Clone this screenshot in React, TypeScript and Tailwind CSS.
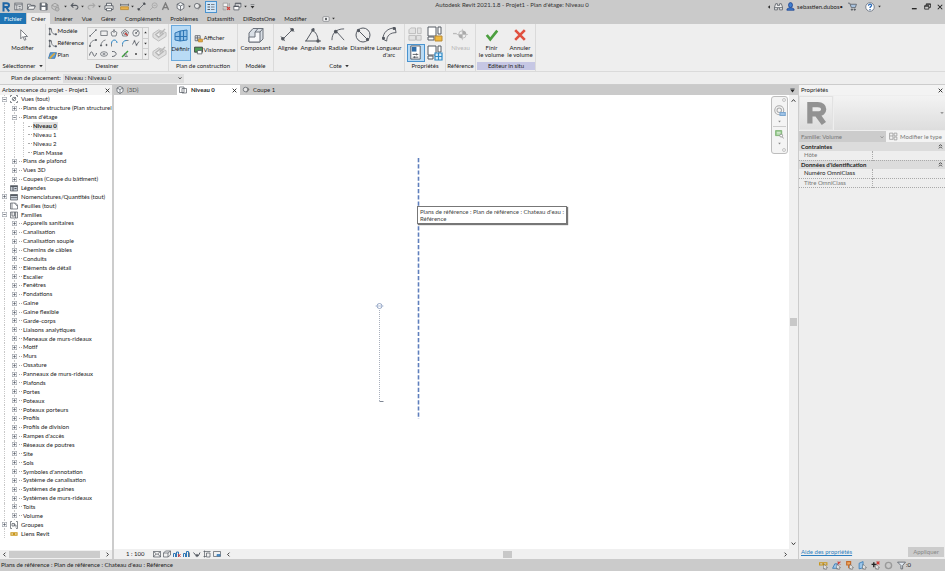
import { useState } from 'react'
import type { ReactNode } from 'react'

function Svg({ className = 'size-[10px]', children }: { className?: string; children: ReactNode }) {
  return (
    <svg viewBox="0 0 16 16" className={`shrink-0 ${className}`} fill="none" stroke="#555a62" strokeWidth="1.4" aria-hidden="true">
      {children}
    </svg>
  )
}

function Caret({ className = 'size-[4px]' }: { className?: string }) {
  return <Svg className={className}><path d="M1 4h14l-7 9z" fill="#333" stroke="none" /></Svg>
}

function Cross({ className = 'size-[6px]' }: { className?: string }) {
  return <Svg className={className}><path d="M2 2l12 12M14 2L2 14" stroke="#222" strokeWidth="2.8" /></Svg>
}

function Chevron({ dir, className = 'size-[5px]' }: { dir: 'up' | 'down' | 'left' | 'right'; className?: string }) {
  const d = {
    up: 'M2 12l6-7 6 7',
    down: 'M2 5l6 7 6-7',
    left: 'M11 2L5 8l6 6',
    right: 'M5 2l6 6-6 6',
  }[dir]
  return <Svg className={className}><path d={d} stroke="#333" strokeWidth="3" /></Svg>
}

const cube = (
  <>
    <path d="M8 1l6 3v7l-6 4-6-4V4z" fill="#f4f6f8" />
    <path d="M2 4l6 3 6-3M8 7v8" />
  </>
)

const sectionMark = (
  <>
    <circle cx="7" cy="7" r="4.5" fill="#e8e8e8" />
    <path d="M11 2l4 5-7 8 3-6z" fill="#777" stroke="none" />
  </>
)

type Tool = { label: string; cell: string; icon: ReactNode }

const quickTools: Tool[] = [
  { label: 'Accueil', cell: 'w-[13px]', icon: <Svg className="size-[9px]"><rect x="1.5" y="2" width="13" height="12" fill="#f3f3f3" /><path d="M1.5 5h13M5 5v9M8 8h4M8 11h4" /></Svg> },
  { label: 'Ouvrir', cell: 'w-[13px]', icon: <Svg className="size-[9px]"><path d="M1 13V4h5l1 2h6v2M1 13l3-6h11l-3 6z" fill="#f3f3f3" /></Svg> },
  { label: 'Enregistrer', cell: 'w-[11px]', icon: <Svg className="size-[9px]"><path d="M2 2h11l1.500 2v10H2z" fill="#6a7078" /><path d="M5 2h6v4H5zM4.500 9h7v5h-7z" fill="#fff" stroke="none" /></Svg> },
  { label: 'Synchroniser', cell: 'w-[12px]', icon: <Svg><path d="M8 2l5 3v5l-5 3-5-3V5zM3 5l5 3 5-3" stroke="#999" /><circle cx="11.500" cy="11.500" r="3" fill="#bbb" stroke="#999" /></Svg> },
  { label: 'Options de synchronisation', cell: 'w-[8px]', icon: <Caret className="size-[3px]" /> },
  { label: 'Annuler', cell: 'w-[10px]', icon: <Svg className="size-[9px]"><path d="M6 2L2 6l4 4M2 6h8c6 0 5 7 0 7" strokeWidth="1.800" /></Svg> },
  { label: 'Historique annuler', cell: 'w-[7px]', icon: <Caret className="size-[3px]" /> },
  { label: 'Rétablir', cell: 'w-[10px]', icon: <Svg className="size-[9px]"><path d="M10 2l4 4-4 4M14 6H6c-6 0-5 7 0 7" stroke="#a8a8a8" strokeWidth="1.800" /></Svg> },
  { label: 'Historique rétablir', cell: 'w-[7px]', icon: <Caret className="size-[3px]" /> },
  { label: 'Imprimer', cell: 'w-[12px]', icon: <Svg><path d="M4 6V2h8v4M4 12H1.500V6h13v6H12" fill="#f3f3f3" /><path d="M4 10h8v4H4z" fill="#fff" /></Svg> },
  { label: 'Mesurer', cell: 'ml-[3px] w-[12px]', icon: <Svg className="size-[9px]"><path d="M1 3v4M15 3v4M1 5h14" /><path d="M1 8.500h14v5H1z" fill="#e8b04a" stroke="#b98a34" /></Svg> },
  { label: 'Options de mesure', cell: 'w-[5px]', icon: <Caret className="size-[3px]" /> },
  { label: 'Cote alignée', cell: 'w-[13px]', icon: <Svg className="size-[9px]"><path d="M3 13L13 3M1 11l4 4M11 1l4 4" /><circle cx="3" cy="13" r="1.500" fill="#444" /><circle cx="13" cy="3" r="1.500" fill="#444" /></Svg> },
  { label: 'Étiquette', cell: 'w-[11px]', icon: <Svg className="size-[9px]"><circle cx="10" cy="6" r="4.500" stroke="#a5a5a5" /><path d="M7 9l-5 5M8 6h4" stroke="#a5a5a5" /></Svg> },
  { label: 'Texte', cell: 'w-[12px]', icon: <Svg className="size-[9px]"><path d="M2.500 14L8 2l5.500 12M5 10h6" stroke="#7c7c7c" strokeWidth="2.400" /></Svg> },
  { label: 'Vue 3D', cell: 'ml-[3px] w-[12px]', icon: <Svg className="size-[9px]">{cube}</Svg> },
  { label: 'Options 3D', cell: 'w-[6px]', icon: <Caret className="size-[3px]" /> },
  { label: 'Coupe', cell: 'w-[11px]', icon: <Svg className="size-[9px]">{sectionMark}</Svg> },
  { label: 'Lignes fines', cell: 'ml-[2px] h-[12px] w-[12px] border border-[#4a93cf] bg-[#cfe5f7]', icon: <Svg className="size-[8px]"><path d="M1 3h5M1 8h5M1 13h5" strokeWidth="2.400" /><path d="M8 3h7M8 8h7M8 13h7" /></Svg> },
  { label: 'Fermer les vues inactives', cell: 'ml-[3px] w-[12px]', icon: <Svg className="size-[9px]"><path d="M2 2h8v6H2z" fill="#f3f3f3" stroke="#999" /><path d="M2 10v4h5M13 2v5" stroke="#999" /><path d="M9 9l5 5M14 9l-5 5" stroke="#d0413a" strokeWidth="2.400" /></Svg> },
  { label: 'Changer de fenêtre', cell: 'w-[11px]', icon: <Svg className="size-[9px]"><path d="M4 2h10v7H4z" fill="#f3f3f3" /><path d="M1.500 7h9v7h-9z" fill="#fff" /><path d="M1.500 8h9M4 3h10" strokeWidth="2" /></Svg> },
  { label: 'Fenêtres', cell: 'w-[5px]', icon: <Caret className="size-[3px]" /> },
  { label: "Personnaliser la barre d'outils", cell: 'w-[9px]', icon: <Svg className="size-[5px]"><path d="M2 2h12" strokeWidth="2" /><path d="M2 6h12l-6 8z" fill="#333" stroke="none" /></Svg> },
]

const ribbonTabs = ['Créer', 'Insérer', 'Vue', 'Gérer', 'Compléments', 'Problèmes', 'Datasmith', 'DiRootsOne', 'Modifier']

function TitleBar() {
  return (
    <div className="flex h-[13px] items-center">
      <div className="flex shrink-0 items-center">
        <div className="flex w-[12px] justify-center">
          <Svg className="size-[10px]"><path d="M4 15V2h5c5 0 5 6 0 6H4M8 8l5 7" stroke="#1d65a6" strokeWidth="3.200" /></Svg>
        </div>
        {quickTools.map(t => (
          <button key={t.label} aria-label={t.label} className={`flex shrink-0 items-center justify-center ${t.cell}`}>{t.icon}</button>
        ))}
      </div>
      <h1 className="flex-1 pb-[3px] text-center text-[#333]">Autodesk Revit 2021.1.8 - Projet1 - Plan d'étage: Niveau 0</h1>
      <div className="flex shrink-0 items-center">
        <button aria-label="Réduire" className="mr-[3px]"><Svg className="size-[4px]"><path d="M12 1v14L3 8z" fill="#333" stroke="none" /></Svg></button>
        <button aria-label="Rechercher" className="mr-[3px]">
          <Svg className="size-[9px]"><path d="M3 3h3v3h4V3h3l2 6v5h-5v-4H6v4H1V9z" fill="#f0f0f0" /><path d="M1 10h5M10 10h5" /></Svg>
        </button>
        <button className="mr-[5px] flex items-center gap-[2px]">
          <Svg className="size-[9px]"><ellipse cx="8" cy="5.500" rx="3.500" ry="4.500" fill="#3f7fd0" stroke="#1b3f8c" /><path d="M1.500 14.500c0-4 4-4 6.500-4s6.500 0 6.500 4z" fill="#3f7fd0" stroke="#1b3f8c" /></Svg>
          sebastien.dubos•
        </button>
        <button aria-label="App Store" className="mr-[8px]">
          <Svg className="size-[9px]"><path d="M0 2h3l3 8h7l2-6H4" fill="#a9c3e0" /><circle cx="7" cy="13.500" r="1.200" fill="#444" /><circle cx="12" cy="13.500" r="1.200" fill="#444" /></Svg>
        </button>
        <button aria-label="Aide" className="mr-[3px]">
          <Svg><circle cx="8" cy="8" r="6.800" fill="#fff" stroke="#6b7480" /><path d="M5.500 6c0-3.500 5-3.500 5-.5C10.500 7.500 8 7 8 9.500M8 11v2" stroke="#2667b5" strokeWidth="2" /></Svg>
        </button>
        <button aria-label="Options d'aide" className="mr-[30px]"><Caret className="size-[3px]" /></button>
        <button aria-label="Réduire la fenêtre" className="mr-[6px]"><Svg className="size-[7px]"><path d="M2 13h11" strokeWidth="3" stroke="#222" /></Svg></button>
        <button aria-label="Niveau inférieur" className="mr-[6px]"><Svg className="size-[7px]"><path d="M5 5V2h10v8h-4M1.500 6h9.500v8H1.500zM1 7.500h10M5 3h10" stroke="#222" strokeWidth="1.800" /></Svg></button>
        <button aria-label="Fermer" className="mr-[2px]"><Cross /></button>
      </div>
    </div>
  )
}

function TabStrip() {
  const [active, setActive] = useState('Créer')
  return (
    <nav className="flex h-[11px] items-stretch">
      <button className="w-[26px] bg-[#1f74b4] text-white">Fichier</button>
      <div className="ml-px flex gap-px">
        {ribbonTabs.map(t => (
          <button key={t} onClick={() => setActive(t)} className={`px-[4px] ${t === active ? 'bg-[#eeeeee]' : ''}`}>{t}</button>
        ))}
      </div>
      <button aria-label="Affichage du ruban" className="ml-[11px] flex items-center gap-[2px]">
        <Svg className="h-[6px] w-[8px]"><rect x="0" y="2" width="16" height="12" rx="2" fill="#fff" /><circle cx="8" cy="8" r="2.500" fill="#333" /></Svg>
        <Caret className="size-[3px]" />
      </button>
    </nav>
  )
}

function Panel({ title, className, caret, highlight, children }: {
  title: string; className: string; caret?: boolean; highlight?: boolean; children: ReactNode
}) {
  return (
    <section className={`flex shrink-0 flex-col border-r border-[#dadada] ${className}`}>
      <div className="flex h-[38px] justify-center pt-px">{children}</div>
      <div className={`flex h-[8px] items-center justify-center gap-[3px] whitespace-nowrap ${highlight ? 'bg-[#c6c7e4]' : ''}`}>
        {title}
        {caret && <Caret />}
      </div>
    </section>
  )
}

function BigButton({ lines, className = '', muted, children }: {
  lines: string[]; className?: string; muted?: boolean; children: ReactNode
}) {
  return (
    <button disabled={muted} className={`flex shrink-0 flex-col items-center whitespace-nowrap leading-[7px] ${muted ? 'text-[#b5b5b5]' : ''} ${className}`}>
      <span className="flex h-[19px] items-center">{children}</span>
      {lines.map(l => <span key={l}>{l}</span>)}
    </button>
  )
}

function SmallButton({ label, children }: { label: string; children: ReactNode }) {
  return (
    <button className="flex h-[12px] items-center gap-px whitespace-nowrap">
      {children}
      {label}
    </button>
  )
}

const polyArc = (
  <>
    <path d="M3 13V3h3c0 7 2 10 8 10" />
    <path d="M2 2h2v2H2zM2 12h2v2H2zM13 12h2v2h-2z" fill="#555a62" />
  </>
)

const drawTools: [string, ReactNode][] = [
  ['Ligne', <><path d="M2 14L14 2" /><circle cx="2" cy="14" r="1" /><circle cx="14" cy="2" r="1" /></>],
  ['Rectangle', <path d="M1.500 4h13v9h-13z" />],
  ['Polygone inscrit', <><path d="M8 3l6 4-2 7H4L2 7z" /><path d="M8 0v8" /></>],
  ['Polygone circonscrit', <><path d="M8 1l7 5-2.500 8h-9L1 6z" /><circle cx="8" cy="8" r="3" /><path d="M8 8l5 5" stroke="#d23b35" strokeWidth="2.500" /></>],
  ['Cercle', <><circle cx="8" cy="8" r="6.500" /><path d="M8 8l4-4" /><circle cx="8" cy="8" r="1" fill="#444" /></>],
  ['Arc début-fin-rayon', <><path d="M2 14C2 7 7 2 14 2" /><circle cx="2" cy="14" r="1.300" fill="#444" /><circle cx="14" cy="2" r="1.300" fill="#444" /></>],
  ['Arc centre-extrémités', <><path d="M2 13C2 7 6 3 11 2" /><circle cx="2" cy="13" r="1.300" fill="#444" /><circle cx="13" cy="12" r="1.300" fill="#444" /></>],
  ['Arc tangent', <><path d="M3 15V8" /><path d="M3 9c0-9 11-9 11-1" stroke="#2a87c8" strokeWidth="2" /></>],
  ['Arc de congé', <><path d="M3 15v-4M10 3h5" /><path d="M3 11c0-5 3-8 8-8" stroke="#2a87c8" strokeWidth="2" /></>],
  ['Spline', <><path d="M1 11l4-7 4 8 5-7" strokeWidth="1.600" /><circle cx="5" cy="4" r="1.200" /><circle cx="9" cy="12" r="1.200" /></>],
  ['Spline par points', <path d="M1 11c2-9 5-9 7-3s5 6 7-2" strokeWidth="1.800" />],
  ['Ellipse', <><ellipse cx="8" cy="8" rx="7" ry="4.500" /><path d="M5 8h6M8 6v4" /></>],
  ['Ellipse partielle', <path d="M4 3c11-1 11 10 0 10" strokeWidth="1.800" />],
  ['Choisir des lignes', <><path d="M2 14L14 2" stroke="#3da53a" strokeWidth="3" /><path d="M8 6l5 7H8z" fill="#fff" /></>],
  ['Point', <circle cx="8" cy="8" r="2" fill="#444" stroke="none" />],
]

function Ribbon() {
  return (
    <div className="flex h-[48px] border-b border-[#dadada] bg-[#eeeeee]">
      <Panel title="Sélectionner" caret className="w-[46px]">
        <BigButton lines={['Modifier']}><Svg className="size-[12px]"><path d="M5 1v12l3-3 2 5 2-1-2-4h4z" fill="#fff" strokeWidth="1" /></Svg></BigButton>
      </Panel>

      <Panel title="Dessiner" className="w-[123px]">
        <div className="flex w-[39px] flex-col">
          <SmallButton label="Modèle"><Svg className="size-[9px]">{polyArc}</Svg></SmallButton>
          <SmallButton label="Référence"><Svg className="size-[9px]">{polyArc}</Svg></SmallButton>
          <SmallButton label="Plan"><Svg className="size-[9px]"><path d="M4 3h11l-3 10H1z" fill="#5e9ed6" stroke="#2c6ba8" /><path d="M3 13l9-9" stroke="#dca83c" strokeWidth="3" /></Svg></SmallButton>
        </div>
        <div className="mt-[2px] flex h-[33px] border border-[#cfcfcf]">
          <div className="grid w-[54px] grid-cols-5 grid-rows-3 place-items-center">
            {drawTools.map(([label, shape]) => (
              <button key={label} aria-label={label}><Svg className="size-[8px]">{shape}</Svg></button>
            ))}
          </div>
          <div className="flex w-[6px] flex-col divide-y divide-[#cfcfcf] border-l border-[#cfcfcf]">
            <button aria-label="Haut" className="flex flex-1 items-center justify-center"><Svg className="size-[3px]"><path d="M1 12h14L8 3z" fill="#333" stroke="none" /></Svg></button>
            <button aria-label="Bas" className="flex flex-1 items-center justify-center"><Caret className="size-[3px]" /></button>
            <button aria-label="Plus" className="flex flex-1 items-center justify-center"><Caret className="size-[3px]" /></button>
          </div>
        </div>
        <div className="ml-[3px] flex flex-col gap-[3px] pt-[2px]">
          {['Dessiner sur la face', 'Dessiner sur le plan de construction'].map(l => (
            <button key={l} aria-label={l} disabled>
              <Svg className="size-[15px]"><path d="M1 7l6-4 8 3v4l-8 5-6-4z" fill="#e0e0e0" stroke="#bcbcbc" strokeWidth="1" /><path d="M4 8l4-3 4 2-5 4zM8 8l6-6" fill="#f0f0f0" stroke="#b8b8b8" strokeWidth="1.500" /></Svg>
            </button>
          ))}
        </div>
      </Panel>

      <Panel title="Plan de construction" className="w-[69px]">
        <BigButton lines={['Définir']} className="h-[36px] w-[20px] border border-[#6aa9dc] bg-[#b9dbf5]">
          <Svg className="size-[16px]"><path d="M2 5l5-2v10l-5-1zM7 3l7-1v10l-7 1z" fill="#8fc0e8" stroke="#2f76b5" strokeWidth="1" /><path d="M2 8.500h12M10.500 2.500v10" stroke="#2f76b5" strokeWidth="1" /></Svg>
        </BigButton>
        <div className="ml-[3px] flex flex-col pt-[7px]">
          <SmallButton label="Afficher"><Svg className="size-[9px]"><path d="M2 3h9v9H2zM2 7h9M6 3v9" /><path d="M8 9h7v5H8z" fill="#e7a93c" stroke="#b98a34" /></Svg></SmallButton>
          <SmallButton label="Visionneuse"><Svg className="size-[9px]"><path d="M1 2h14v9H1z" fill="#4f9d57" stroke="#333" /><path d="M6 8h8v6H6z" fill="#fff" /></Svg></SmallButton>
        </div>
      </Panel>

      <Panel title="Modèle" className="w-[36px]">
        <BigButton lines={['Composant']}>
          <Svg className="size-[16px]"><path d="M1 6l4-4.500h10V12l-3 3H1z" fill="#d9dfe6" stroke="#6a717b" strokeWidth="1" strokeLinejoin="round" /><path d="M7 5h5v10H1v-5h6z" fill="#f7f8fa" stroke="#6a717b" strokeWidth="1" strokeLinejoin="round" /><path d="M12 5l3-3.500M7 5l3-3.500" stroke="#6a717b" strokeWidth="1" /></Svg>
        </BigButton>
      </Panel>

      <Panel title="Cote" caret className="w-[131px]">
        <BigButton lines={['Alignée']} className="w-[25px]">
          <Svg className="size-[15px]"><path d="M3 13L13 3M1 10l4 5M11 1l4 4" strokeWidth="1" /><circle cx="3" cy="12.500" r="1.200" fill="#444" /><circle cx="13" cy="3" r="1.200" fill="#444" /></Svg>
        </BigButton>
        <BigButton lines={['Angulaire']} className="w-[26px]">
          <Svg className="size-[16px]"><path d="M0 14h16M1 14L9 1M7 3c4 2 6 6 6 11" strokeWidth="1" /><circle cx="8" cy="3" r="1" fill="#444" /><circle cx="13" cy="14" r="1" fill="#444" /></Svg>
        </BigButton>
        <BigButton lines={['Radiale']} className="w-[24px]">
          <Svg className="size-[15px]"><path d="M1 14C1 7 5 2 14 2M6 5l8 9" strokeWidth="1" /><circle cx="5" cy="5" r="1.300" fill="#444" /></Svg>
        </BigButton>
        <BigButton lines={['Diamètre']} className="w-[25px]">
          <Svg className="size-[16px]"><circle cx="8" cy="8" r="7" strokeWidth="1" /><path d="M3 3l10 10" strokeWidth="1" /><circle cx="3.500" cy="3.500" r="1" fill="#444" /><circle cx="12.500" cy="12.500" r="1" fill="#444" /></Svg>
        </BigButton>
        <BigButton lines={['Longueur', "d'arc"]} className="w-[28px]">
          <Svg className="size-[15px]"><path d="M1 13C1 6 6 1 14 1M5 15c0-6 4-9 10-9M1 13l4 2M14 1l1 5" strokeWidth="1" /><circle cx="1.500" cy="12" r="1" fill="#444" /><circle cx="13" cy="1.500" r="1" fill="#444" /></Svg>
        </BigButton>
      </Panel>

      <Panel title="Propriétés" className="w-[41px]">
        <div className="grid grid-cols-2 grid-rows-2 gap-x-px">
          <button aria-label="Catégorie de famille" disabled className="flex size-[18px] items-center justify-center">
            <Svg className="size-[15px]"><path d="M3 1h5v6H1V3zM10 1h4v6h-4zM1 9h7v5H1zM9 9h5v5H9z" fill="#e2e2e2" stroke="#bcbcbc" strokeWidth="1" /></Svg>
          </button>
          <button aria-label="Propriétés du type" className="flex size-[18px] items-center justify-center">
            <Svg className="size-[16px]"><path d="M1 1h8v9H1zM11 1h3v7h-3zM1 11h6v3H1z" fill="#fff" strokeWidth="1" /><path d="M8 10h7v5H8z" fill="#f0b93f" stroke="#b98a34" strokeWidth="1" /></Svg>
          </button>
          <button aria-label="Propriétés" className="flex size-[18px] items-center justify-center border border-[#4a93cf] bg-[#b9dbf5]">
            <Svg className="size-[15px]"><path d="M3 1h10v14H3z" fill="#fff" strokeWidth="1" /><path d="M4 2h5v5H4z" fill="#2f6da8" stroke="none" /><path d="M5 10h6M5 13h6M9 9v2M7 12v2" strokeWidth="1" /></Svg>
          </button>
          <button aria-label="Types de famille" className="flex size-[18px] items-center justify-center">
            <Svg className="size-[16px]"><path d="M1 1h8v9H1zM11 1h3v6h-3zM1 11h5v3H1z" fill="#fff" strokeWidth="1" /><path d="M8 8h7v7H8zM11.500 8v7M8 11.500h7" fill="#d8ecfa" stroke="#2f8ac6" strokeWidth="1.200" /></Svg>
          </button>
        </div>
      </Panel>

      <Panel title="Référence" className="w-[30px]">
        <BigButton lines={['Niveau']} muted>
          <Svg className="size-[15px]"><path d="M0 7h4" stroke="#bbb" /><circle cx="10" cy="8" r="4" stroke="#bbb" strokeWidth="1" /><path d="M10 8V4a4 4 0 014 4zM10 8v4a4 4 0 01-4-4z" fill="#aaa" stroke="none" /><path d="M10 2v12M4 8h12" stroke="#bbb" strokeWidth=".8" /></Svg>
        </BigButton>
      </Panel>

      <Panel title="Editeur in situ" highlight className="w-[60px] pl-px">
        <BigButton lines={['Finir', 'le volume']} className="w-[28px]">
          <Svg className="size-[14px]"><path d="M2 8l4 5 8-10" stroke="#4c9f3f" strokeWidth="3" /></Svg>
        </BigButton>
        <BigButton lines={['Annuler', 'le volume']} className="w-[29px]">
          <Svg className="size-[14px]"><path d="M2.500 2.500l11 11M13.500 2.500l-11 11" stroke="#e0503f" strokeWidth="3" /></Svg>
        </BigButton>
      </Panel>
    </div>
  )
}

type Row = { level: 0 | 1 | 2; label: string; state?: 'open' | 'closed'; icon?: ReactNode; selected?: boolean }

const sheet = <path d="M1 3h14v11H1z" fill="#c3cad3" />

const families = [
  'Appareils sanitaires', 'Canalisation', 'Canalisation souple', 'Chemins de câbles', 'Conduits', 'Eléments de détail',
  'Escalier', 'Fenêtres', 'Fondations', 'Gaine', 'Gaine flexible', 'Garde-corps', 'Liaisons analytiques',
  'Meneaux de murs-rideaux', 'Motif', 'Murs', 'Ossature', 'Panneaux de murs-rideaux', 'Plafonds', 'Portes', 'Poteaux',
  'Poteaux porteurs', 'Profils', 'Profils de division', "Rampes d'accès", 'Réseaux de poutres', 'Site', 'Sols',
  "Symboles d'annotation", 'Système de canalisation', 'Systèmes de gaines', 'Systèmes de murs-rideaux', 'Toits', 'Volume',
]

const rows: Row[] = [
  { level: 0, label: 'Vues (tout)', state: 'open', icon: <><circle cx="8" cy="8" r="3.500" /><path d="M1 4V1h3M12 1h3v3M15 12v3h-3M4 15H1v-3M6 10l6-6" /></> },
  { level: 1, label: 'Plans de structure (Plan structurel', state: 'closed' },
  { level: 1, label: "Plans d'étage", state: 'open' },
  { level: 2, label: 'Niveau 0', selected: true },
  { level: 2, label: 'Niveau 1' },
  { level: 2, label: 'Niveau 2' },
  { level: 2, label: 'Plan Masse' },
  { level: 1, label: 'Plans de plafond', state: 'closed' },
  { level: 1, label: 'Vues 3D', state: 'closed' },
  { level: 1, label: 'Coupes (Coupe du bâtiment)', state: 'closed' },
  { level: 0, label: 'Légendes', icon: <>{sheet}<path d="M1 5h14M6 5v9M9 9h4" strokeWidth="2" /></> },
  { level: 0, label: 'Nomenclatures/Quantités (tout)', state: 'closed', icon: <>{sheet}<path d="M1 4.500h14" strokeWidth="3" /><path d="M1 9h14" /></> },
  { level: 0, label: 'Feuilles (tout)', icon: <><path d="M1 2h10l4 4v8H1z" fill="#fff" /><path d="M4 2v12M9 2l5 6" /></> },
  { level: 0, label: 'Familles', state: 'open', icon: <><path d="M1 2h14v12H1z" fill="#eee" /><path d="M4 2v8h5V2M11 2v12" /></> },
  ...families.map((label): Row => ({ level: 1, label, state: 'closed' })),
  { level: 0, label: 'Groupes', state: 'closed', icon: <><path d="M4 1H1v14h3M12 1h3v14h-3" /><path d="M4 5h5v5H4zM7 8h5v5" /></> },
  { level: 0, label: 'Liens Revit', icon: <path d="M2 5.500h5v5H2zM9 5.500h5v5H9zM5 8h6" stroke="#c9971c" strokeWidth="2.400" /> },
]

function Node({ state }: { state?: 'open' | 'closed' }) {
  return (
    <span className="grid h-full w-[9px] shrink-0 place-items-center">
      <span className="col-start-1 row-start-1 h-full border-l border-dotted border-[#c8c8c8]" />
      {state && (
        <button aria-label={state === 'open' ? 'Réduire' : 'Développer'} className="col-start-1 row-start-1 flex">
          <Svg className="size-[5px]">
            <rect x="1" y="1" width="14" height="14" fill="#fff" stroke="#9ea3ab" strokeWidth="2" />
            <path d={state === 'open' ? 'M4 8h8' : 'M4 8h8M8 4v8'} stroke="#555b66" strokeWidth="2.500" />
          </Svg>
        </button>
      )}
    </span>
  )
}

function TreeRow({ row }: { row: Row }) {
  return (
    <li className="flex min-h-0 flex-1 items-center whitespace-nowrap">
      <Node state={row.level === 0 ? row.state : undefined} />
      {row.level > 0 && <span className="ml-px h-full"><Node state={row.level === 1 ? row.state : undefined} /></span>}
      {row.level === 2 && <Node />}
      {row.icon
        ? <Svg className="ml-px mr-[3px] size-[8px]">{row.icon}</Svg>
        : <span className={`mr-px shrink-0 border-t border-dotted border-[#aaa] ${row.level === 2 ? 'w-[4px]' : 'w-[3px]'}`} />}
      <span className={row.selected ? 'bg-[#e2e2e2] pr-px font-bold' : ''}>{row.label}</span>
    </li>
  )
}

function ProjectBrowser() {
  return (
    <aside className="flex w-[114px] shrink-0 flex-col border-r-2 border-[#cccccc] bg-white">
      <div className="flex h-[10px] items-center justify-between bg-[#f3f3f3] pl-[2px] pr-[2px]">
        <h2>Arborescence du projet - Projet1</h2>
        <button aria-label="Fermer l'arborescence"><Cross className="size-[5px]" /></button>
      </div>
      <ul className="flex min-h-0 flex-1 flex-col overflow-hidden pb-[12px]">
        {rows.map(r => <TreeRow key={r.label} row={r} />)}
      </ul>
      <div className="flex h-[9px] items-center justify-between bg-[#f0f0f0] px-[2px]">
        <Chevron dir="left" />
        <span className="ml-[2px] mr-[5px] h-[7px] flex-1 bg-[#cccccc]" />
        <Chevron dir="right" />
      </div>
    </aside>
  )
}

function ViewTabs() {
  return (
    <div className="flex h-[10px] items-stretch bg-[#cacaca]">
      <button className="flex w-[63px] items-center gap-[3px] pl-[2px] text-[#555]">
        <Svg className="size-[8px]">{cube}</Svg>{'{3D}'}
      </button>
      <div className="flex w-[63px] items-center bg-white pl-[2px]">
        <button className="flex flex-1 items-center gap-[4px] font-bold">
          <Svg className="size-[8px]"><path d="M1 2h9v11H1zM6 5h9v9H6z" fill="#fff" /></Svg>Niveau 0
        </button>
        <button aria-label="Fermer Niveau 0" className="mr-[3px]"><Cross className="size-[5px]" /></button>
      </div>
      <button className="flex items-center gap-[3px] pl-[2px]">
        <Svg className="size-[8px]">{sectionMark}</Svg>Coupe 1
      </button>
      <button aria-label="Liste des vues" className="ml-auto mr-[3px]"><Svg className="size-[5px]"><path d="M1 2h14" strokeWidth="2" /><path d="M1 5h14l-7 9z" fill="#222" stroke="none" /></Svg></button>
    </div>
  )
}

function NavBar() {
  return (
    <div className="absolute right-px top-px flex h-[58px] w-[17px] flex-col items-center justify-between rounded-[3px] border border-[#bdbdbd] bg-[#f4f4f4] py-px">
      <Svg className="mr-[1px] size-[4px] self-end"><circle cx="8" cy="8" r="6" stroke="#999" strokeWidth="2" /></Svg>
      <button aria-label="Disque de navigation">
        <Svg className="size-[12px]"><circle cx="7" cy="7" r="6" stroke="#aaa" /><circle cx="7" cy="7" r="3" stroke="#aaa" /><path d="M8 10h7v4H8z" fill="#9fc3e6" stroke="#7ba6cf" /></Svg>
      </button>
      <Svg className="size-[3px]"><path d="M1 4h14l-7 9z" fill="#888" stroke="none" /></Svg>
      <span className="w-[13px] border-t border-[#ccc]" />
      <button aria-label="Zoom">
        <Svg className="size-[9px]"><path d="M1 1h11v9H1z" fill="#8cc483" stroke="#79b06f" /><path d="M3 4h7M3 7h7" stroke="#fff" /><circle cx="11" cy="10" r="2.500" fill="#fff" stroke="#888" /><path d="M13 12l2 3" stroke="#888" /></Svg>
      </button>
      <Svg className="size-[3px]"><path d="M1 4h14l-7 9z" fill="#888" stroke="none" /></Svg>
      <Svg className="mr-[1px] size-[4px] self-end"><circle cx="8" cy="8" r="6" stroke="#999" strokeWidth="2" /></Svg>
    </div>
  )
}

const viewControls: [string, ReactNode][] = [
  ['Niveau de détail', <><path d="M1 3h14v11H1z" /><path d="M1 3l7 6 7-6M1 14l5-6M15 14l-5-6" /></>],
  ['Style visuel', <path d="M1 6h9v8H1zM1 6l4-4h10v8l-5 4M10 6l5-4" />],
  ['Trajectoire du soleil', <><path d="M1 14V7h4v7M7 14V4h4v10" stroke="#2f76b5" strokeWidth="2" /><path d="M10 8l5 6M15 8l-5 6" stroke="#d23b35" strokeWidth="2" /></>],
  ['Ombres', <><path d="M1 14V7h4v7M7 14V3h4v11" stroke="#2f76b5" strokeWidth="2" /><path d="M13 5v9" /></>],
  ['Cadrage', <><path d="M1 5l5 6h5l3-6" strokeWidth="2" /><circle cx="8" cy="11" r="2.500" /></>],
  ['Zone cadrée', <path d="M1 3h14M3 1v14M1 13h5M7 6h7v8H7z" />],
  ['Masquer', <><path d="M1 3h14v10H1z" /><path d="M8 9h6v3H8z" fill="#5e9ed6" stroke="#2f76b5" /></>],
]

function DrawingView() {
  return (
    <main className="flex min-w-0 flex-1 flex-col">
      <ViewTabs />
      <div className="flex min-h-0 flex-1">
        <div className="relative flex-1 overflow-hidden bg-white">
          <svg className="absolute left-0 top-0 h-full w-full" fill="none" aria-hidden="true">
            <path d="M304.500 63v261" stroke="#5f7fbd" strokeWidth="1.600" strokeDasharray="4.200 2.010" />
            <path d="M265.500 215v91" stroke="#a9b0bd" strokeWidth="1" strokeDasharray="1 1" />
            <path d="M265.500 306.500h4" stroke="#7f8794" />
            <circle cx="265.500" cy="211" r="2.500" stroke="#7f93b8" strokeWidth=".8" />
            <path d="M261.500 211h8" stroke="#9fb0ce" strokeWidth=".8" />
          </svg>
          <div role="tooltip" className="absolute left-[303px] top-[111px] whitespace-nowrap border border-[#777] bg-white px-[2px] py-px leading-[7px] text-[#444] shadow-[1px_1px_1px_#777]">
            Plans de référence : Plan de référence : Chateau d'eau :<br />Référence
          </div>
          <NavBar />
        </div>
        <div className="flex w-[9px] flex-col items-center justify-between bg-[#f0f0f0] py-[3px]">
          <Chevron dir="up" />
          <span className="h-[8px] w-[7px] bg-[#c8c8c8]" />
          <Chevron dir="down" />
        </div>
      </div>
      <div className="flex h-[10px] items-center bg-[#f0f0f0]">
        <button className="w-[39px] pl-[12px] text-left">1 : 100</button>
        <div className="flex gap-[2px]">
          {viewControls.map(([label, shape]) => (
            <button key={label} aria-label={label}><Svg className="size-[8px]">{shape}</Svg></button>
          ))}
        </div>
        <span className="ml-[5px]"><Chevron dir="left" /></span>
        <span className="flex flex-1 justify-center"><span className="h-[7px] w-[9px] bg-[#c8c8c8]" /></span>
        <span className="mr-[10px]"><Chevron dir="right" /></span>
      </div>
    </main>
  )
}

function PropertyGroup({ title, fields }: { title: string; fields: { name: string; muted: boolean }[] }) {
  return (
    <tbody>
      <tr className="h-[9px] bg-[#dcdcdc]">
        <th colSpan={2} className="p-0 text-left font-bold">
          <button className="flex w-full items-center justify-between px-[2px]">
            {title}
            <Svg className="size-[5px]"><path d="M3 7l5-5 5 5M3 14l5-5 5 5" stroke="#222" strokeWidth="2.500" /></Svg>
          </button>
        </th>
      </tr>
      {fields.map(f => (
        <tr key={f.name} className="h-[9px] border-b border-dotted border-[#aaa]">
          <td className={`w-1/2 border-r border-dotted border-[#aaa] p-0 pl-[5px] ${f.muted ? 'text-[#777]' : ''}`}>
            <label htmlFor={f.name}>{f.name}</label>
          </td>
          <td className="p-0"><input id={f.name} disabled={f.muted} className="block h-[8px] w-full bg-transparent px-px" /></td>
        </tr>
      ))}
    </tbody>
  )
}

function PropertiesPanel() {
  return (
    <aside className="flex w-[147px] shrink-0 flex-col border-l border-[#cccccc] bg-[#eeeeee]">
      <div className="flex h-[10px] items-center justify-between bg-[#f3f3f3] pl-[2px] pr-[2px]">
        <h2>Propriétés</h2>
        <button aria-label="Fermer les propriétés"><Cross className="size-[5px]" /></button>
      </div>
      <button aria-label="Sélecteur de type" className="mt-px flex h-[34px] items-center gap-px">
        <span className="flex h-full w-[34px] items-center justify-center border border-[#e2e2e2] bg-linear-to-b from-[#f3f3f3] to-[#dddddd]">
          <Svg className="size-[28px]"><path d="M4.500 14V3.200H9c4.500 0 4.500 5.300 0 5.300H5M8.500 8.500l4 5.500" stroke="#929292" strokeWidth="3" /></Svg>
        </span>
        <span className="flex h-full flex-1 items-center justify-end bg-linear-to-b from-[#f3f3f3] to-[#dddddd] pr-px"><Svg className="size-[4px]"><path d="M1 4h14l-7 9z" fill="#999" stroke="none" /></Svg></span>
      </button>
      <div className="mt-px flex h-[11px] items-stretch text-[#777]">
        <div className="relative w-[87px]">
          <select aria-label="Famille" disabled className="h-full w-full appearance-none bg-[#cccccc] px-[2px]">
            <option>Famille: Volume</option>
          </select>
          <span className="pointer-events-none absolute inset-y-0 right-[2px] flex items-center opacity-40"><Chevron dir="down" className="size-[4px]" /></span>
        </div>
        <button disabled className="flex flex-1 items-center justify-center gap-[2px] whitespace-nowrap bg-[#f3f3f3]">
          <Svg className="size-[9px]"><path d="M1 2h6v11H1zM9 2h5v5H9zM9 9h5v5H9zM1 7h6" stroke="#999" /></Svg>
          Modifier le type
        </button>
      </div>
      <table className="w-full table-fixed border-collapse">
        <PropertyGroup title="Contraintes" fields={[{ name: 'Hôte', muted: true }]} />
        <PropertyGroup title="Données d'identification" fields={[{ name: 'Numéro OmniClass', muted: false }, { name: 'Titre OmniClass', muted: true }]} />
      </table>
      <div className="mt-auto flex items-center justify-between pb-[2px] pl-[2px] pr-px">
        <a href="#aide" className="text-[#2f7fc0] underline">Aide des propriétés</a>
        <button disabled className="h-[10px] w-[36px] bg-[#cccccc] text-[#888]">Appliquer</button>
      </div>
    </aside>
  )
}

const pointer = <path d="M9 6l6 6h-3l1 3-2 1-1-3-2 1z" fill="#fff" stroke="#555" strokeWidth="1" />

const selectionTools: [string, ReactNode][] = [
  ['Sélectionner les liens', <><path d="M1 3h6v4H1zM8 3h6v4H8z" stroke="#c9971c" strokeWidth="2" />{pointer}</>],
  ['Sélectionner les éléments de support', <><path d="M1 13l4-8h5v8z" fill="#9cc5e8" stroke="#2f76b5" /><path d="M10 1l5 5M15 1l-5 5" stroke="#d23b35" strokeWidth="2" />{pointer}</>],
  ['Sélectionner les éléments verrouillés', <><path d="M3 1h7v6H3zM6.500 7v6" fill="#f0a860" stroke="#c46a2a" strokeWidth="2" />{pointer}</>],
  ['Sélectionner par face', <><path d="M2 4l7-3v11l-7 2z" fill="#9cc5e8" stroke="#2f76b5" />{pointer}</>],
  ['Glisser les éléments', <><path d="M1 6h9M5 2v9" stroke="#222" strokeWidth="2.500" /><path d="M10 1l5 5M15 1l-5 5" stroke="#d23b35" strokeWidth="2.200" />{pointer}</>],
  ['Processus en arrière-plan', <circle cx="8" cy="8" r="5.500" stroke="#9a9a9a" strokeWidth="2.500" />],
]

function StatusBar() {
  return (
    <footer className="flex h-[12px] shrink-0 items-center justify-between bg-[#cbcbcb] pl-px pr-[34px]">
      <p>Plans de référence : Plan de référence : Chateau d'eau : Référence</p>
      <div className="flex items-center gap-[4px]">
        {selectionTools.map(([label, shape]) => (
          <button key={label} aria-label={label}><Svg className="size-[9px]">{shape}</Svg></button>
        ))}
        <button className="flex items-center"><Svg className="size-[9px]"><path d="M1 2h14l-5 6v6H7V8z" fill="#dfe7ef" /></Svg>:0</button>
      </div>
    </footer>
  )
}

export default function App() {
  return (
    <div className="flex h-screen flex-col overflow-hidden bg-[#eeeeee] font-[Lato,'Noto_Sans',sans-serif] text-[6px] leading-[8px] text-[#222222]">
      <header className="shrink-0 bg-[#cacaca]">
        <TitleBar />
        <TabStrip />
        <Ribbon />
      </header>
      <div className="flex h-[13px] shrink-0 items-center border-b border-[#cccccc] bg-[#eeeeee] pl-[11px]">
        <label htmlFor="placement" className="mr-[2px]">Plan de placement:</label>
        <div className="relative w-[121px]">
          <select id="placement" className="block h-[9px] w-full appearance-none bg-[#dedede] px-[2px]">
            <option>Niveau : Niveau 0</option>
          </select>
          <span className="pointer-events-none absolute inset-y-0 right-[2px] flex items-center"><Chevron dir="down" className="size-[4px]" /></span>
        </div>
      </div>
      <div className="flex min-h-0 flex-1">
        <ProjectBrowser />
        <DrawingView />
        <PropertiesPanel />
      </div>
      <StatusBar />
    </div>
  )
}
